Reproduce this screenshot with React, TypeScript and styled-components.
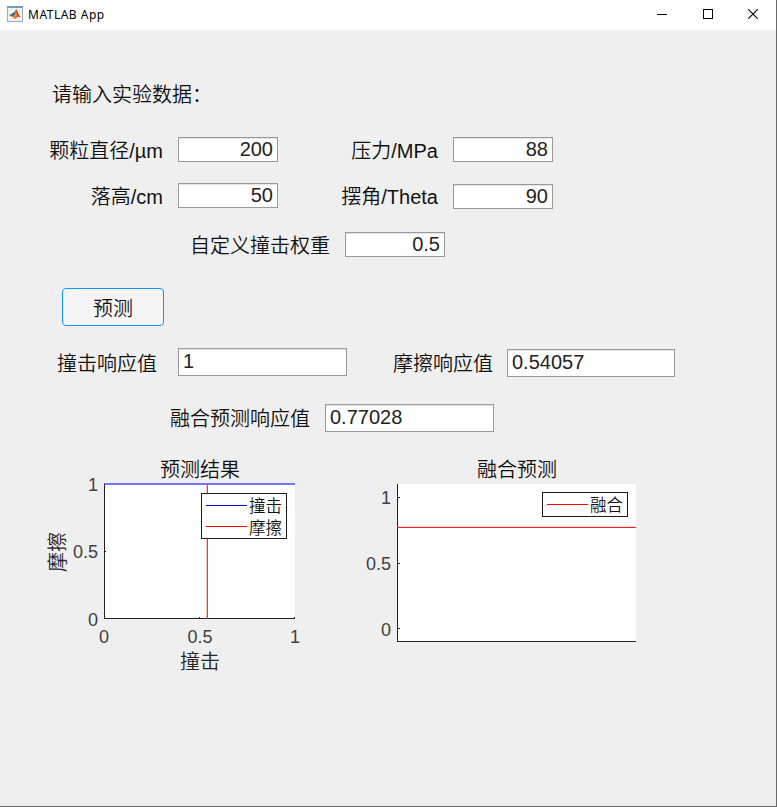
import React from 'react';
import styled, { createGlobalStyle } from 'styled-components';

const GlobalStyle = createGlobalStyle`
  * { box-sizing: border-box; }
  body { margin: 0; overflow: hidden; }
`;

const Window = styled.div`
  width: 777px;
  height: 807px;
  display: flex;
  flex-direction: column;
  background: #efefef;
  border-right: 1px solid #6a6a6a;
  border-bottom: 1px solid #6a6a6a;
  font-family: 'Liberation Sans', 'Noto Sans CJK SC', sans-serif;
  font-weight: 350;
  font-size: 20px;
  color: #111;
`;

const TitleBar = styled.header`
  height: 30px;
  flex: none;
  display: flex;
  align-items: center;
  background: #fff;
  padding-left: 7px;
`;

const AppIcon = styled.svg`
  display: block;
  margin-bottom: 2px;
`;

const Title = styled.span`
  flex: 1;
  margin-left: 5px;
  font: 400 12px/28px 'Noto Sans', sans-serif;
  letter-spacing: 0.5px;
  color: #000;
  padding-bottom: 1px;
`;

const Controls = styled.div`
  display: flex;
  height: 30px;
`;

const ControlButton = styled.button`
  width: 45.5px;
  padding: 9px 0 0;
  border: 0;
  background: none;
  display: flex;
  justify-content: center;
`;

const Content = styled.main`
  flex: 1;
  display: flex;
  flex-direction: column;
`;

const Prompt = styled.div`
  margin: 50px 0 0 52px;
  height: 30px;
  line-height: 30px;
`;

const Row = styled.div<{ $top: number }>`
  display: flex;
  align-items: flex-start;
  margin-top: ${(p) => p.$top}px;
`;

const Field = styled.label<{ $left: number; $top?: number }>`
  display: flex;
  align-items: flex-start;
  margin-left: ${(p) => p.$left}px;
  margin-top: ${(p) => p.$top ?? 0}px;
`;

const LabelText = styled.span<{ $shift: number; $width: number; $gap: number }>`
  width: ${(p) => p.$width}px;
  height: 24px;
  line-height: 24px;
  margin-top: ${(p) => p.$shift}px;
  margin-right: ${(p) => p.$gap}px;
  text-align: right;
  white-space: nowrap;
`;

const Input = styled.input<{ $width: number; $text?: boolean }>`
  width: ${(p) => p.$width}px;
  height: ${(p) => (p.$text ? 28 : 25)}px;
  border: 1px solid #999;
  border-radius: 0;
  background: #fff;
  box-shadow: inset 0 1px 0 #e4e4e4;
  outline: none;
  padding: 0 4px 1px;
  margin: 0;
  font: 400 20px/22px 'Liberation Sans', sans-serif;
  color: #222;
  text-align: ${(p) => (p.$text ? 'left' : 'right')};
`;

const PredictButton = styled.button`
  width: 102px;
  height: 38px;
  margin: 30px 0 0 62px;
  padding: 3px 0 0;
  border: 1px solid #0f96f5;
  border-radius: 4px;
  background: #f5f5f5;
  font: inherit;
  line-height: 30px;
  color: #111;
`;

const Charts = styled.div`
  display: flex;
  align-items: flex-start;
  margin-top: 20px;
  padding-left: 40px;
`;

const Chart = styled.svg<{ $left?: number }>`
  display: block;
  margin-left: ${(p) => p.$left ?? 0}px;
  overflow: visible;
`;

function MatlabIcon() {
  return (
    <AppIcon width="16" height="16" viewBox="0 0 16 16">
      <rect x=".5" y=".5" width="15" height="15" fill="#f1f1f1" stroke="#9eabb7" />
      <rect x="0" y="0" width="16" height="2" fill="#6f9dbc" />
      <path d="M2 9 L5.2 7.6 L7 9 L4.9 10.7Z" fill="#397fb3" />
      <path d="M5.2 7.6 L7.5 6.2 L9.2 3.2 L8.1 8.2 L4.9 10.7 L6 9Z" fill="#24466c" />
      <path d="M9.2 3.2 C10.4 4.8 11.4 8.9 14 11.7 C11.9 10.5 10.8 10.5 9.3 12 L7.4 13 C7 11.5 6.1 10.8 4.9 10.7 C7 10.1 8.2 7 9.2 3.2Z" fill="#dc6424" />
      <path d="M9.2 3.2 C10.4 4.8 10.5 8.9 14 11.7 C11.5 10.3 10 9 9.2 3.2Z" fill="#8f2f1d" />
      <path d="M8.9 6 L9.6 9.5 L7.7 11.5 L7.2 10Z" fill="#f39b2d" />
    </AppIcon>
  );
}

type FieldProps = {
  label: string;
  value: string;
  left: number;
  labelWidth: number;
  width: number;
  top?: number;
  gap?: number;
  shift?: number;
  text?: boolean;
};

function DataField({ label, value, left, labelWidth, width, top, gap = 15, shift = 2, text }: FieldProps) {
  return (
    <Field $left={left} $top={top}>
      <LabelText $shift={shift} $width={labelWidth} $gap={gap}>{label}</LabelText>
      <Input $width={width} $text={text} defaultValue={value} />
    </Field>
  );
}

function ResultChart() {
  return (
    <Chart width="275" height="230" viewBox="40 452 275 230" fill="#111">
      <rect x="104" y="484" width="191" height="135" fill="#fff" />
      <g fill="#222" shapeRendering="crispEdges">
        <rect x="104" y="484" width="1" height="135" />
        <rect x="104" y="618" width="191" height="1" />
        <rect x="105" y="551" width="1" height="1" />
        <rect x="199" y="617" width="1" height="1" />
        <rect x="294" y="617" width="1" height="1" />
      </g>
      <rect x="104" y="483" width="191" height="2" fill="#7272ff" />
      <rect x="104" y="484" width="1" height="1" fill="#1414a0" />
      <rect x="206" y="485" width="1" height="133" fill="#ffc0c0" />
      <rect x="207" y="485" width="1" height="134" fill="#f03a3a" />
      <text x="200" y="477" fontSize="20" textAnchor="middle">预测结果</text>
      <g fontSize="18" fill="#404040" fontWeight="400">
        <text x="98" y="491" textAnchor="end">1</text>
        <text x="98" y="558" textAnchor="end">0.5</text>
        <text x="98" y="626" textAnchor="end">0</text>
        <text x="104" y="643" textAnchor="middle">0</text>
        <text x="200" y="643" textAnchor="middle">0.5</text>
        <text x="295" y="643" textAnchor="middle">1</text>
      </g>
      <text x="200" y="669" fontSize="20" fill="#262626" textAnchor="middle">撞击</text>
      <text transform="translate(65 552) rotate(-90)" fontSize="20" fill="#262626" textAnchor="middle">摩擦</text>
      <rect x="201.5" y="493.5" width="85" height="45" fill="#fff" stroke="#1c1c1c" />
      <rect x="206" y="505" width="41" height="1" fill="#0000e8" />
      <rect x="206" y="526" width="41" height="1" fill="#f00" />
      <text x="249" y="512" fontSize="16.5">撞击</text>
      <text x="249" y="534" fontSize="16.5">摩擦</text>
    </Chart>
  );
}

function FusionChart() {
  return (
    <Chart $left={40} width="300" height="200" viewBox="355 452 300 200" fill="#111">
      <rect x="397" y="484" width="239" height="158" fill="#fff" />
      <g fill="#222" shapeRendering="crispEdges">
        <rect x="397" y="484" width="1" height="158" />
        <rect x="397" y="641" width="239" height="1" />
        <rect x="398" y="497" width="2" height="1" />
        <rect x="398" y="563" width="2" height="1" />
        <rect x="398" y="628" width="2" height="1" />
      </g>
      <rect x="398" y="526" width="238" height="1" fill="#ffe2e2" />
      <rect x="397" y="527" width="239" height="1" fill="#ee2222" />
      <text x="517" y="477" fontSize="20" textAnchor="middle">融合预测</text>
      <g fontSize="18" fill="#404040" fontWeight="400" textAnchor="end">
        <text x="391" y="504">1</text>
        <text x="391" y="570">0.5</text>
        <text x="391" y="636">0</text>
      </g>
      <rect x="542.5" y="492.5" width="85" height="24" fill="#fff" stroke="#1c1c1c" />
      <rect x="547" y="504" width="41" height="1" fill="#f00" />
      <text x="590" y="511" fontSize="16.5">融合</text>
    </Chart>
  );
}

export default function App() {
  return (
    <>
      <GlobalStyle />
      <Window>
        <TitleBar>
          <MatlabIcon />
          <Title>MATLAB App</Title>
          <Controls>
            <ControlButton aria-label="Minimize">
              <svg width="10" height="10"><rect y="5" width="10" height="1" /></svg>
            </ControlButton>
            <ControlButton aria-label="Maximize">
              <svg width="10" height="10"><rect x=".5" y=".5" width="9" height="9" fill="none" stroke="#000" /></svg>
            </ControlButton>
            <ControlButton aria-label="Close">
              <svg width="10" height="10"><path d="M.3.3 9.7 9.7M9.7.3.3 9.7" stroke="#000" strokeWidth="1.1" /></svg>
            </ControlButton>
          </Controls>
        </TitleBar>
        <Content>
          <Prompt>请输入实验数据：</Prompt>
          <Row $top={27}>
            <DataField label="颗粒直径/µm" value="200" left={43} labelWidth={120} width={100} />
            <DataField label="压力/MPa" value="88" left={40} labelWidth={120} width={100} />
          </Row>
          <Row $top={20}>
            <DataField label="落高/cm" value="50" left={43} labelWidth={120} width={100} />
            <DataField label="摆角/Theta" value="90" left={40} labelWidth={120} width={100} top={1} shift={1} />
          </Row>
          <Row $top={23}>
            <DataField label="自定义撞击权重" value="0.5" left={190} labelWidth={140} width={100} />
          </Row>
          <PredictButton>预测</PredictButton>
          <Row $top={22}>
            <DataField label="撞击响应值" value="1" left={57} labelWidth={100} gap={21} width={169} shift={4} text />
            <DataField label="摩擦响应值" value="0.54057" left={46} labelWidth={100} gap={14} width={168} top={1} shift={3} text />
          </Row>
          <Row $top={27}>
            <DataField label="融合预测响应值" value="0.77028" left={170} labelWidth={140} width={169} shift={3} text />
          </Row>
          <Charts>
            <ResultChart />
            <FusionChart />
          </Charts>
        </Content>
      </Window>
    </>
  );
}
